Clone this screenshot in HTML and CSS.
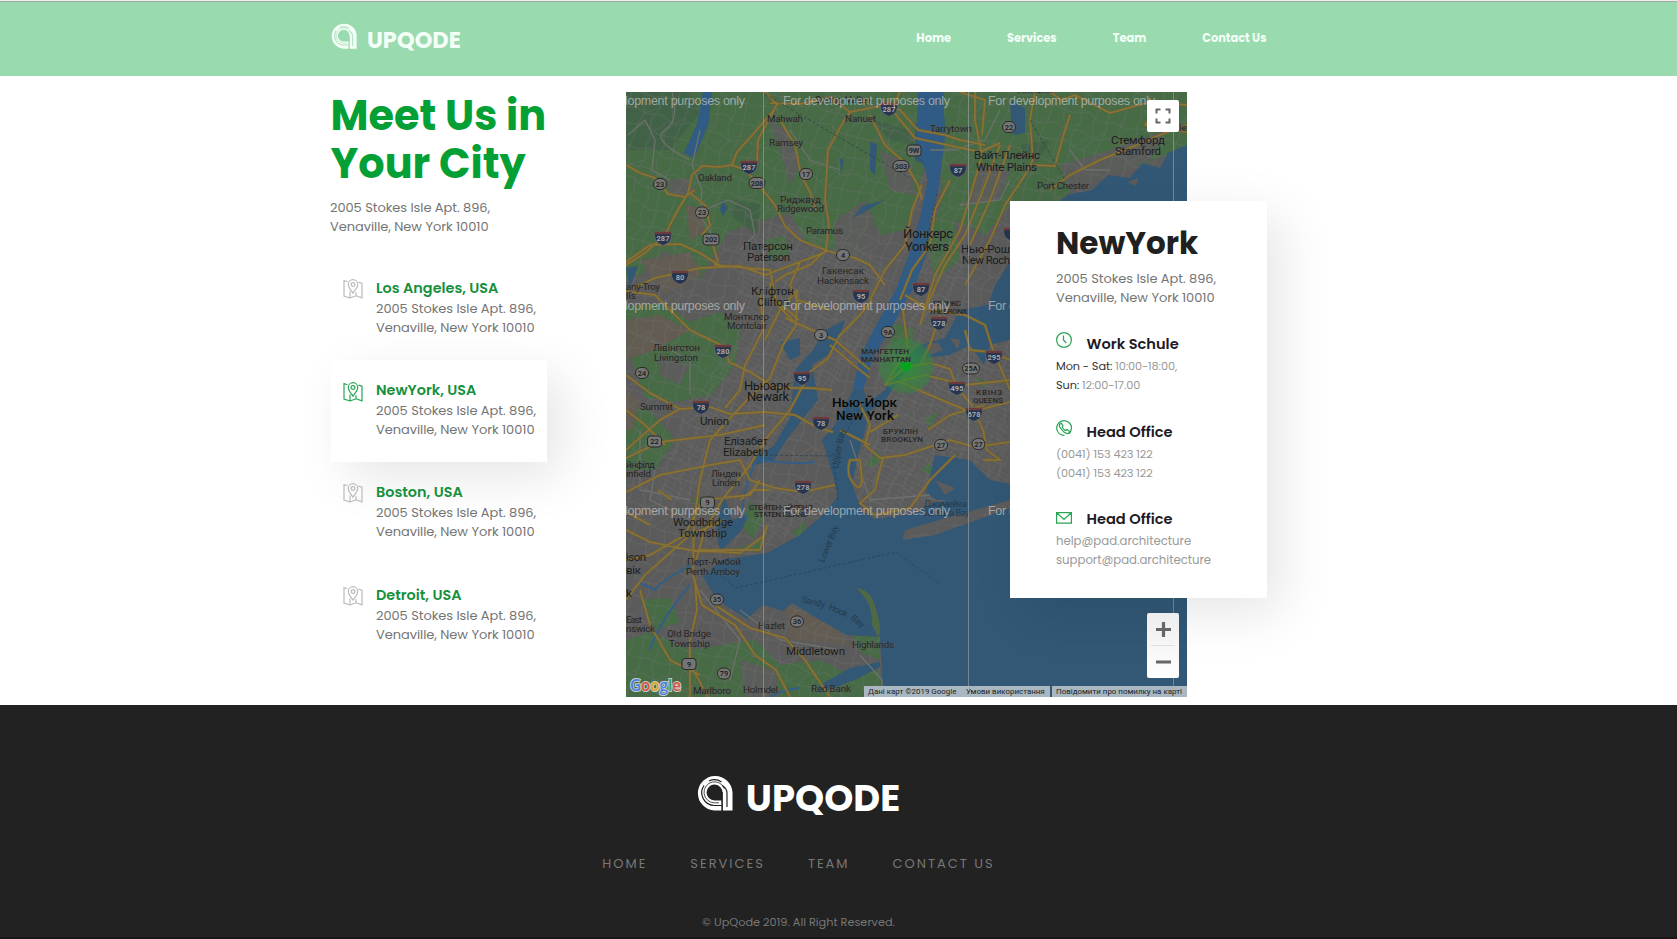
FILE: index.html
```html
<!DOCTYPE html>
<html lang="en">
<head>
<meta charset="utf-8">
<title>UPQODE</title>
<link rel="stylesheet" href="styles.css">
</head>
<body>
<svg class="defs" width="0" height="0" aria-hidden="true">
  <symbol id="logo" viewBox="0 0 36 36">
    <path d="M24.5 35.500H17.500A17.300 17.300 0 1 1 35.500 17.500V35.500H25.500V18A8 8 0 1 0 17.500 25.500H24.500Z" fill="currentColor"/>
    <path class="logo-cut" d="M24.500 30.500H17.500A12.800 12.800 0 0 1 7 10.500M12 6A12.900 12.900 0 0 1 24.500 7M25 10.500Q30 13 30 18.500V32M25.200 17V36" fill="none" stroke-width="1.200"/>
    <path class="logo-cut" d="M22 27.800H17.500A10.500 10.500 0 1 1 27.500 14" fill="none" stroke-width=".8"/>
  </symbol>
  <symbol id="pin" viewBox="0 0 20 20">
    <path d="M4.500 2.700 1 1.600V17l6 2V12.500M7 19l6-2.200 6 2V4.200l-3.500-1M13 16.800v-3.500M10 14.200C7.500 10.500 5.300 8.300 5.300 5.400a4.700 4.700 0 0 1 9.400 0c0 2.900-2.200 5.100-4.700 8.800Z" fill="none" stroke="currentColor" stroke-width="1.200"/>
    <circle cx="10" cy="5.500" r="1.900" fill="none" stroke="currentColor" stroke-width="1.200"/>
  </symbol>
</svg>

<header class="header">
  <div class="container header-row">
    <a class="brand"><svg class="brand-icon"><use href="#logo"/></svg><span>UPQODE</span></a>
    <nav class="nav"><a>Home</a><a>Services</a><a>Team</a><a>Contact Us</a></nav>
  </div>
</header>

<main class="container main">
  <section class="cities">
    <h1>Meet Us in<br>Your City</h1>
    <p class="address">2005 Stokes Isle Apt. 896,<br>Venaville, New York 10010</p>
    <ul class="list">
      <li class="item"><svg class="pin"><use href="#pin"/></svg><div><h3>Los Angeles, USA</h3><p class="address">2005 Stokes Isle Apt. 896,<br>Venaville, New York 10010</p></div></li>
      <li class="item active"><svg class="pin"><use href="#pin"/></svg><div><h3>NewYork, USA</h3><p class="address">2005 Stokes Isle Apt. 896,<br>Venaville, New York 10010</p></div></li>
      <li class="item"><svg class="pin"><use href="#pin"/></svg><div><h3>Boston, USA</h3><p class="address">2005 Stokes Isle Apt. 896,<br>Venaville, New York 10010</p></div></li>
      <li class="item"><svg class="pin"><use href="#pin"/></svg><div><h3>Detroit, USA</h3><p class="address">2005 Stokes Isle Apt. 896,<br>Venaville, New York 10010</p></div></li>
    </ul>
  </section>

  <section class="map">
    <svg class="map-canvas" viewBox="626 92 561 605" width="561" height="605">
      <defs>
        <pattern id="streets" width="58" height="54" patternUnits="userSpaceOnUse" patternTransform="rotate(17)">
          <path d="M0 8 14 10 30 5 44 11 58 8M0 24l12 3 18-2 14 5 14-6M0 42l18-4 12 6 28-2M8 0 6 14l6 13-4 12 0 15M22 0l3 18-5 14 4 22M40 0l-3 16 5 14-6 12 4 12M50 0l2 20-4 20 2 14M12 27l13-9M42 30l10-10M24 44l12-14"/>
        </pattern>
        <pattern id="blocks" width="17" height="15" patternUnits="userSpaceOnUse" patternTransform="rotate(31)">
          <path d="M0 3H17M0 8 17 9M0 13H17M4 0V15M11 0 12 15"/>
        </pattern>
        <radialGradient id="pulse"><stop offset="0" stop-color="#00c814" stop-opacity=".75"/><stop offset=".25" stop-color="#14b428" stop-opacity=".42"/><stop offset=".9" stop-color="#28a03c" stop-opacity=".25"/><stop offset="1" stop-color="#28a03c" stop-opacity="0"/></radialGradient>
        <g id="interstate"><path d="M-8-6.500Q-4-4.500 0-6.500 4-4.500 8-6.500 10.500 4 0 7.500-10.500 4-8-6.500Z" fill="#25344f" stroke="#777" stroke-width=".6"/><path d="M-8.300-6.300H8.300L8.500-3.800H-8.500Z" fill="#6b3b3c"/></g>
      </defs>
      <rect x="626" y="92" width="561" height="605" fill="#5c5b5b"/>
      <g class="park">
        <path d="M626 92H930L925 165 905 230 880 235 865 200 835 222 835 250 808 245 790 213 755 222 728 232 710 262 700 280 665 250 640 275 626 280Z"/>
        <path d="M940 92H1187V148L1130 168 1080 182 1060 201 1010 205 985 235 955 220 960 260 935 280 927 245 942 200Z"/>
        <path d="M626 306 665 303 690 322 720 312 740 330 735 365 712 395 675 402 645 398 626 345Z"/>
        <path d="M626 405 650 410 675 440 655 470 626 470ZM626 640 650 632 690 650 755 640 780 665 820 660 850 675 880 670 882 697 626 697ZM640 600 670 598 680 622 655 630Z"/>
        <path d="M765 240 785 235 790 255 770 262ZM792 533 806 520 803 542ZM735 550 765 538 760 552ZM850 630 880 635V660L860 652ZM866 465 877 450 882 460 872 468ZM925 417 938 412 930 430ZM975 378 990 382 982 388ZM920 470 930 462 932 475ZM885 320 915 330 910 345 890 342ZM690 500 710 495 712 510ZM750 500 765 515 752 540 742 525Z"/>
      </g>
      <g class="forest"><path d="M626 92 690 92 700 112 670 150 626 150ZM735 200 760 205 757 235 730 215ZM872 120 910 130 915 145 890 140ZM1020 145 1050 140 1035 165Z"/></g>
      <g class="sand"><path d="M626 320 660 315 690 330 655 350 626 360ZM640 260 690 252 702 275 665 295ZM686 205 702 208 705 232 690 240ZM785 605 830 625 850 645 820 642 790 640ZM626 390 640 400 632 430 626 430Z"/></g>
      <g class="town-ground"><path d="M665 180 690 178 695 195 672 196ZM768 118 785 130 800 165 790 185 780 150ZM880 150 912 165 915 195 890 190ZM980 165 1010 170 1000 200 965 205ZM1060 165 1110 150 1165 130 1150 160 1100 178 1070 190ZM840 215 870 212 872 260 840 262ZM660 355 690 365 680 385 660 375ZM740 660 775 670 780 697 745 697Z"/></g>
      <rect class="streets" x="626" y="92" width="561" height="605" fill="url(#streets)"/>
      <path class="blocks" fill="url(#blocks)" d="M770 225 835 230 890 270 870 345 820 400 750 470 700 500 650 500 690 400 745 330 735 260ZM865 425 880 350 930 310 960 350 1010 335V490L935 500 880 510 850 470ZM760 485 810 480 830 500 780 540 750 530ZM905 250 960 240 965 285 910 330Z"/>
      <g class="water">
        <path d="M918 92H943L945 135 939 185 930 220 927 252 915 285 906 300 893 325 873 357 863 390 870 405 866 428 858 455 852 485 862 511 875 519 912 514 935 503 960 497 1010 489V505L960 514 925 525 905 531 903 540 935 535 1010 508V595H1187V697H883L880 637 847 635 820 620 792 603 783 611 763 605 747 619 717 600 703 577 720 560 767 553 800 535 827 511 838 495 827 455 822 440 835 425 853 390 860 357 878 322 896 290 910 252 920 218 928 180 917 140Z"/>
        <path d="M1187 145 1168 153 1160 168 1142 163 1130 178 1108 175 1092 190 1070 194 1060 201V215H1187ZM1010 262 995 285 988 305 960 310 945 338 920 345 900 363 885 390 865 405 863 415 884 402 901 377 925 358 950 355 970 345 984 365 990 345 1010 340ZM703 92 712 92 708 125 694 158 684 153 697 125ZM870 142 877 144 875 175 870 170ZM885 200 862 206 853 218 868 210ZM722 200 728 208 723 216 720 210ZM840 158 844 160 841 175ZM626 268 638 266 630 288ZM795 370 813 350 825 330 845 320 836 350 812 365 818 400 790 435 773 461 752 465 755 454 773 447 790 418ZM1010 100 1025 108 1025 133 1013 135 1011 118ZM915 125 922 115 925 165 915 160ZM935 455 970 460 990 480 1010 484V500H937L926 493ZM820 685 850 668 880 662V667L855 680 820 693ZM780 342 800 338 800 355 790 360ZM724 495 732 520 748 515 742 530 720 552 716 530Z"/>
        <path class="creek" d="M758 455Q735 510 747 520M703 560Q660 580 655 590L638 582M815 462Q790 465 760 460M770 697Q780 690 800 688M690 585Q660 620 650 650"/>
      </g>
      <path class="river" d="M918 92H943L945 135 939 185 930 220 927 252 915 285 906 300 893 325 873 357 863 390 853 390 860 357 878 322 896 290 910 252 920 218 928 180 917 140ZM703 92 712 92 708 125 694 158 684 153 697 125Z"/>
      <path class="spit" d="M857 588Q872 590 876 610 882 625 879 638L872 625Q872 605 864 597Z"/>
      <path class="land" d="M903 538 905 530 950 517 1010 500V505L935 529ZM926 345 938 342 943 350 930 355ZM950 338 960 340 958 350ZM935 480 955 488 945 495ZM1128 182 1138 178 1136 186Z"/>
      <g class="minor"><path d="M628 135 645 120 655 140 652 170 670 180M700 130 692 165 702 190 700 215 712 235M672 92Q680 120 665 130T690 160M740 250 755 235 750 210 728 200 700 212M790 130 810 160 840 170M930 150 955 150 985 140 1000 110M1070 150 1085 170 1110 170M700 590 740 640 730 680M740 610 780 640 840 650M860 655 882 680V697M850 440 870 500 930 495M650 340 690 360 690 395M655 470 650 500 690 520M1010 180 1000 200 960 205M640 430 640 490 690 500"/></g>
      <g class="road-edge">
        <path id="roadpath" d="M626 165 640 173 655 178 668 194 685 197 695 190M626 265 645 253 665 235 675 215 688 193 692 175 702 166 720 167 732 165 745 170 757 183 775 205 785 226 800 240 828 251 855 258 870 265 885 285M732 165 737 152 755 132 774 110 777 104 765 92M770 103 800 104 830 97 850 112 885 105 900 110 918 130 945 135 960 140 985 145M757 165 758 140 774 110M780 120 795 145 801 175 810 192 816 210M850 112 843 122 828 150 825 200 829 225 826 250 810 265 785 275 775 282M870 115 885 145 905 163 918 185 922 200M626 292 655 278 700 268 740 266 765 275 800 262 828 251M626 262 650 245 680 244 700 253 722 267M710 235 718 262M690 193 705 205 710 225 702 235M632 292 655 295 690 330 725 347 729 362 752 373 775 388 810 388 832 390M770 282 773 300 797 325M797 290 796 325 783 345 770 378 745 402 710 440 700 480 694 520 693 575 702 605 735 625 755 655 776 670 790 697M760 290 763 330 745 365 740 390 725 408M872 300 860 315 840 335 828 358 810 372 790 410 765 440 750 465 722 500 705 530 696 560M797 290 780 310 765 340M785 318 812 330 835 340 870 370M830 345 855 366 870 378M626 375 650 393 680 409 710 407 730 414 765 412 795 415 818 428 833 432M626 450 660 420 680 409M626 458 660 442 720 435 765 425M626 492 660 475 710 465 740 460 750 480 775 488 803 492 835 485M714 265 770 270 776 300 799 320M800 262 790 285 797 300 830 310M870 300 885 270 905 245 912 210 922 185M900 300 912 270 930 245 935 210 950 180M975 92 975 120 982 155 972 190 960 230 935 275 920 325M1000 145 983 190 965 235 945 265 925 310M1010 145 990 200 970 245M1035 92 1030 120 1033 160 1025 175 1005 205 990 240 965 285M1050 92 1062 100 1075 95 1110 113 1150 102 1187 105M1155 110 1145 125 1187 132M1050 190 1070 175 1100 160 1125 150 1160 135 1187 125M1033 165 1055 166 1062 140 1070 115M900 92 892 110 915 138 980 152 1000 143M960 92 985 100 982 135M903 310 908 350 893 372 885 385M905 295 930 310 965 315 985 325 993 350 1010 390M885 385 905 367 930 363 950 369 957 388 972 405 983 430 987 450M885 385 925 375 965 385 1010 380M900 382 930 395 970 412 1010 402M928 430 950 415 985 405M860 405 870 425 865 445 880 458 905 455 935 445 950 440 975 447 1010 442M883 457 875 490 860 503 875 515 910 508 930 480 955 455M850 460Q845 475 855 485T860 460ZM987 450 1000 460 983 460M898 415 870 432M840 430 870 445M965 330 970 350 990 352 1010 360M940 315 930 345 920 365M626 530 650 542 690 550 740 553 765 535M626 600 645 575 690 535 725 520M640 590 650 625 670 660 700 675M715 605 750 628 785 638 805 660 815 675 830 697M695 580 697 610 690 640 690 697M626 560 650 555 685 535 702 500 750 495 760 480M700 550 760 550 767 525M626 410 645 425 665 445M740 500 753 490 770 490M708 697 690 664M626 512 650 525M658 490 672 500"/>
      </g>
      <use class="road-core" href="#roadpath"/>
      <path class="dash" d="M765 94 840 138 910 178M720 575 736 588 896 552 940 584M925 250 938 190M1030 120 1065 180M838 500 833 455 865 400M760 455 832 456"/>
      <circle cx="906" cy="366" r="27" fill="#446b45" fill-opacity=".45"/>
      <circle cx="906" cy="366" r="29" fill="url(#pulse)"/><circle cx="906" cy="365.500" r="5" fill="#05a51a"/>

      <g class="label">
        <text x="815" y="103" textLength="56">Spring Valley</text><text x="767" y="122" textLength="36">Mahwah</text><text x="845" y="122" textLength="31">Nanuet</text><text x="769" y="146" textLength="34">Ramsey</text><text x="698" y="181" textLength="34">Oakland</text><text x="780" y="203" textLength="41">Риджвуд</text><text x="777" y="212" textLength="47">Ridgewood</text><text x="806" y="234" textLength="37">Paramus</text><text x="822" y="274" textLength="42">Гакенсак</text><text x="817" y="284" textLength="52">Hackensack</text><text x="626" y="290" textLength="34">any-Troy</text><text x="626" y="299">lls</text><text x="724" y="320" textLength="45">Монтклер</text><text x="727" y="329" textLength="40">Montclair</text><text x="653" y="351" textLength="47">Лівінгстон</text><text x="654" y="361" textLength="44">Livingston</text><text x="640" y="410" textLength="33">Summit</text><text x="626" y="468" textLength="29">йнфілд</text><text x="626" y="477" textLength="25">infield</text><text x="711" y="477" textLength="30">Лінден</text><text x="712" y="486" textLength="28">Linden</text><text x="687" y="565" textLength="54">Перт-Амбой</text><text x="686" y="575" textLength="54">Perth Amboy</text><text x="626" y="623" textLength="16">East</text><text x="626" y="632" textLength="29">nswick</text><text x="667" y="637" textLength="44">Old Bridge</text><text x="669" y="647" textLength="41">Township</text><text x="758" y="629" textLength="27">Hazlet</text><text x="852" y="648" textLength="42">Highlands</text><text x="693" y="694" textLength="38">Marlboro</text><text x="743" y="693" textLength="35">Holmdel</text><text x="811" y="692" textLength="40">Red Bank</text><text x="930" y="132" textLength="42">Tarrytown</text><text x="1037" y="189" textLength="52">Port Chester</text><text x="1018" y="93" textLength="34">Armonk</text><text x="1179" y="131">ie</text>
      </g>
      <g class="label town">
        <text x="743" y="250" textLength="50">Патерсон</text><text x="747" y="261" textLength="43">Paterson</text><text x="751" y="295" textLength="43">Кліфтон</text><text x="757" y="306" textLength="32">Clifton</text><text x="700" y="425" textLength="29">Union</text><text x="724" y="445" textLength="44">Елізабет</text><text x="723" y="456" textLength="45">Elizabeth</text><text x="673" y="526" textLength="60">Woodbridge</text><text x="678" y="537" textLength="49">Township</text><text x="626" y="561" textLength="20">ison</text><text x="626" y="574" textLength="15">вік</text><text x="626" y="597">k</text><text x="786" y="655" textLength="59">Middletown</text><text x="974" y="159" textLength="66">Вайт-Плейнс</text><text x="976" y="171" textLength="61">White Plains</text><text x="1111" y="144" textLength="54">Стемфорд</text><text x="1115" y="155" textLength="46">Stamford</text><text x="961" y="253" textLength="49">Нью-Рош</text><text x="962" y="264" textLength="48">New Roch</text>
      </g>
      <g class="label large"><text x="744" y="390" textLength="46">Ньюарк</text><text x="747" y="401" textLength="42">Newark</text><text x="903" y="238" textLength="50">Йонкерс</text><text x="905" y="251" textLength="44">Yonkers</text></g>
      <g class="label capital"><text x="832" y="407" textLength="65">Нью-Йорк</text><text x="836" y="420" textLength="58">New York</text></g>
      <g class="label borough"><text x="861" y="354" textLength="48">МАНГЕТТЕН</text><text x="861" y="362" textLength="50">MANHATTAN</text><text x="883" y="434" textLength="35">БРУКЛІН</text><text x="881" y="442" textLength="42">BROOKLYN</text><text x="749" y="510" textLength="64">СТЕЙТЕН-АЙЛЕНД</text><text x="754" y="517" textLength="54">STATEN ISLAND</text><text x="933" y="306" textLength="28">БРОНКС</text><text x="929" y="314" textLength="38">THE BRONX</text><text x="976" y="395" textLength="26">КВІНЗ</text><text x="973" y="403" textLength="30">QUEENS</text></g>
      <g class="label sea"><text x="924" y="507" textLength="43">Джамейка</text><text x="923" y="516" textLength="46">Jamaica Bay</text><text transform="translate(838 469) rotate(-80)" textLength="40">Upper Bay</text><text transform="translate(824 563) rotate(-68)" textLength="39">Lower Bay</text><text transform="translate(801 602) rotate(14)" textLength="24">Sandy</text><text transform="translate(828 609) rotate(25)" textLength="20">Hook</text><text transform="translate(850 619) rotate(38)" textLength="15">Bay</text></g>

      <g class="route">
        <g><rect x="653.500" y="178.500" width="13" height="11" rx="5.500"/><rect x="749" y="177.500" width="16" height="11" rx="5.500"/><rect x="799.500" y="168.500" width="13" height="11" rx="5.500"/><rect x="695.500" y="207" width="13" height="11" rx="5.500"/><rect x="836.500" y="249.500" width="13" height="11" rx="5.500"/><rect x="893" y="160.500" width="16" height="11" rx="5.500"/><rect x="1002.500" y="121.500" width="13" height="11" rx="5.500"/><rect x="814.500" y="329.500" width="13" height="11" rx="5.500"/><rect x="635.500" y="367.500" width="13" height="11" rx="5.500"/><rect x="881.500" y="326.500" width="13" height="11" rx="5.500"/><rect x="962.500" y="363" width="17" height="11" rx="5.500"/><rect x="934.500" y="439.500" width="13" height="11" rx="5.500"/><rect x="972" y="438.500" width="13" height="11" rx="5.500"/><rect x="710.500" y="594" width="13" height="11" rx="5.500"/><rect x="790.500" y="616" width="13" height="11" rx="5.500"/><rect x="717.500" y="668" width="13" height="11" rx="5.500"/><rect x="907" y="145" width="14" height="11" rx="3"/><rect x="703" y="234" width="16" height="11" rx="3"/><rect x="647.500" y="436" width="14" height="11" rx="3"/><rect x="700.500" y="497" width="14" height="11" rx="3"/><rect x="682" y="658.500" width="14" height="11" rx="3"/></g>
        <text x="660" y="186.500">23</text><text x="757" y="185.500">208</text><text x="806" y="176.500">17</text><text x="702" y="215">23</text><text x="843" y="257.500">4</text><text x="901" y="168.500">303</text><text x="1009" y="129.500">22</text><text x="821" y="337.500">3</text><text x="642" y="375.500">24</text><text x="888" y="334.500">9A</text><text x="971" y="371">25A</text><text x="941" y="447.500">27</text><text x="978.500" y="446.500">27</text><text x="717" y="602">35</text><text x="797" y="624">36</text><text x="724" y="676">79</text><text x="914" y="153">9W</text><text x="711" y="242">202</text><text x="654.500" y="444">22</text><text x="707.500" y="505">9</text><text x="689" y="667">9</text>
      </g>
      <g class="highway">
        <use href="#interstate" x="889" y="109"/><use href="#interstate" x="749" y="167"/><use href="#interstate" x="663" y="238"/><use href="#interstate" x="680" y="277"/><use href="#interstate" x="958" y="170"/><use href="#interstate" x="921" y="289"/><use href="#interstate" x="861" y="296"/><use href="#interstate" x="723" y="351"/><use href="#interstate" x="802" y="378"/><use href="#interstate" x="701" y="407"/><use href="#interstate" x="821" y="423"/><use href="#interstate" x="803" y="487"/><use href="#interstate" x="939" y="323"/><use href="#interstate" x="994" y="357"/><use href="#interstate" x="957" y="388"/><use href="#interstate" x="974" y="414"/><use href="#interstate" x="1012" y="234"/>
        <text x="889" y="112">287</text><text x="749" y="170">287</text><text x="663" y="241">287</text><text x="680" y="280">80</text><text x="958" y="173">87</text><text x="921" y="292">87</text><text x="861" y="299">95</text><text x="723" y="354">280</text><text x="802" y="381">95</text><text x="701" y="410">78</text><text x="821" y="426">78</text><text x="803" y="490">278</text><text x="939" y="326">278</text><text x="994" y="360">295</text><text x="957" y="391">495</text><text x="974" y="417">678</text>
      </g>
      <path class="tiles" d="M763.500 92V697M968.500 92V697M1173.500 92V697"/>
      <g class="watermark"><text x="578" y="105" textLength="167">For development purposes only</text><text x="783" y="105" textLength="167">For development purposes only</text><text x="988" y="105" textLength="167">For development purposes only</text><text x="578" y="310" textLength="167">For development purposes only</text><text x="783" y="310" textLength="167">For development purposes only</text><text x="988" y="310" textLength="167">For development purposes only</text><text x="578" y="514.500" textLength="167">For development purposes only</text><text x="783" y="514.500" textLength="167">For development purposes only</text><text x="988" y="514.500" textLength="167">For development purposes only</text></g>
      <text class="google" x="630" y="691" textLength="51" lengthAdjust="spacingAndGlyphs"><tspan fill="#4a83e0">G</tspan><tspan fill="#d85040">o</tspan><tspan fill="#dca514">o</tspan><tspan fill="#4a83e0">g</tspan><tspan fill="#3a9a55">l</tspan><tspan fill="#d85040">e</tspan></text>
    </svg>

    <div class="map-button expand"><svg width="16" height="16" viewBox="0 0 16 16"><path d="M1.500 5.500V1.500H5.500M10.500 1.500H14.500V5.500M14.500 10.500V14.500H10.500M5.500 14.500H1.500V10.500" fill="none" stroke="#666" stroke-width="2"/></svg></div>
    <div class="legal"><span class="data">Дані карт ©2019 Google</span><span class="terms">Умови використання</span><span class="report">Повідомити про помилку на карті</span></div>

    <article class="office">
      <h2>NewYork</h2>
      <p class="address">2005 Stokes Isle Apt. 896,<br>Venaville, New York 10010</p>
      <section class="contact hours">
        <h4><svg viewBox="0 0 16 16"><circle cx="8" cy="8" r="7.400"/><path d="M7.500 3.500V8L10.300 11"/></svg>Work Schule</h4>
        <p><b>Mon - Sat:</b> 10:00-18:00,<br><b>Sun:</b> 12:00-17.00</p>
      </section>
      <section class="contact phone">
        <h4><svg viewBox="0 0 16 16"><path d="M3.200 13.600A7.400 7.400 0 1 1 12.800 13.700M3.300 13.600Q5.500 15.500 8.500 15.400"/><path d="M4.300 3.500Q2.500 5 4 7.500T8 12Q11.500 14.800 13.500 12.500L13.800 11.500 10.800 9.500 9.500 10.500Q7.500 9.500 6.200 7.200L7 5.800 5.200 3.200Z"/></svg>Head Office</h4>
        <p>(0041) 153 423 122<br>(0041) 153 423 122</p>
      </section>
      <section class="contact mail">
        <h4><svg viewBox="0 0 16 16"><path d="M.6 2.700H15.400V13.200H.6ZM1 3 8 9.500 15 3"/></svg>Head Office</h4>
        <p>help@pad.architecture<br>support@pad.architecture</p>
      </section>
    </article>
    <div class="map-button zoom"><svg width="32" height="65" viewBox="0 0 32 65"><path d="M9 16.500H24M16.500 9V24M9 49H24" stroke="#666" stroke-width="3.200"/><path d="M4 32.500H28" stroke="#e0e0e0"/></svg></div>
  </section>
</main>

<footer class="footer">
  <div class="footer-inner">
    <a class="brand footer-brand"><svg class="brand-icon"><use href="#logo"/></svg><span>UPQODE</span></a>
    <nav class="footer-nav"><a>HOME</a><a>SERVICES</a><a>TEAM</a><a>CONTACT US</a></nav>
    <p class="copyright">© UpQode 2019. All Right Reserved.</p>
  </div>
</footer>
</body>
</html>
```
FILE: styles.css
```css
* { box-sizing: border-box; margin: 0; padding: 0; }
body {
  width: 1677px; height: 939px; overflow: hidden; background: #fff;
  font-family: Poppins, Inter, "Open Sans", sans-serif; color: #666;
}
.defs { position: absolute; }
.container { width: 937px; margin-left: 330px; }

.header { --cut: #9adaaf; height: 76px; background: #9adaaf; border-top: 1px solid #eee; box-shadow: inset 0 1px #a0aaa3; color: #f4fff7; }
.header-row { display: flex; justify-content: space-between; height: 75px; }
.brand { display: flex; font-weight: 700; }
.brand-icon { width: 26px; height: 26px; margin: 22px 0 0 .5px; }
.logo-cut { stroke: var(--cut); }
.brand span { font-size: 22.500px; line-height: 26px; margin: 26px 0 0 10.500px; }
.nav { display: flex; gap: 56px; font-size: 11.400px; font-weight: 700; line-height: 16px; padding: 29px .5px 0 0; }

.main { display: flex; height: 629px; }
.cities { width: 296px; padding-top: 16px; }
h1 { font-size: 41.400px; line-height: 48px; font-weight: 700; color: #04a035; margin-left: .5px; }
.address { font-size: 13px; line-height: 19px; letter-spacing: -.06px; color: #747474; font-weight: 400; white-space: nowrap; }
.cities > .address { margin-top: 10px; }
.list { list-style: none; margin: 22px 0 0 1px; width: 216px; }
.item { display: flex; gap: 13.500px; height: 102.200px; padding: 20px 0 0 11.500px; position: relative; z-index: 1; }
.item.active { z-index: 0; background: #fff; box-shadow: 15px 15px 50px rgba(0, 0, 0, .1); }
.pin { width: 20px; height: 20px; margin-top: 1px; color: #bbb; flex: none; }
.active .pin { color: #27a552; margin-top: 2px; }
h3 { font-size: 14.400px; line-height: 20px; font-weight: 600; color: #16903c; white-space: nowrap; }
.item .address { margin-top: 1px; }

.map { position: relative; width: 561px; height: 605px; margin-top: 16px; flex: none; }
.map-canvas { display: block; font-family: Roboto, sans-serif; }
.park { fill: #466b45; }
.forest { fill: #416246; }
.sand { fill: #625c52; }
.town-ground { fill: #5a5d59; }
.streets, .blocks { opacity: .45; }
#streets path { fill: none; stroke: #747474; stroke-width: .9; }
#blocks path { fill: none; stroke: #717171; stroke-width: .7; }
.water { fill: #325875; }
.river { fill: #2f5b85; }
.creek { fill: none; stroke: #315f87; stroke-width: 2; }
.spit { fill: #4f6945; }
.land { fill: #5c5c5c; }
.minor { fill: none; stroke: #6e716d; stroke-width: 1.300; }
.road-edge { fill: none; stroke: #716038; stroke-width: 2.800; stroke-linejoin: round; }
.road-core { fill: none; stroke: #8a7434; stroke-width: 1.500; }
#roadpath { stroke-linejoin: round; }
.dash { fill: none; stroke: #2a3d4c; stroke-width: .7; stroke-dasharray: 3 2; }
.label { font-size: 9.800px; fill: #262626; stroke: #606060; stroke-opacity: .45; stroke-width: 1px; paint-order: stroke; }
.town { font-size: 11.500px; fill: #1c1c1c; }
.large { font-size: 13px; fill: #181818; }
.capital { font-size: 13.500px; font-weight: 500; fill: #080808; }
.borough { font-size: 8px; font-weight: 500; }
.sea { fill: #243c50; stroke: none; font-size: 9px; }
.route rect { fill: #757575; stroke: #222; stroke-width: .9; }
.route text { font-size: 7.400px; text-anchor: middle; fill: #181818; font-weight: 500; }
.highway text { font-size: 7.500px; text-anchor: middle; fill: #aaa; font-weight: 700; }
.tiles { stroke: #9b9f9f; stroke-opacity: .65; }
.watermark { font: 12.500px "Liberation Sans", sans-serif; fill: #c0c0c0; fill-opacity: .75; }
.google { font: 600 17px "Open Sans", sans-serif; stroke: #c9cdc9; stroke-width: 2px; paint-order: stroke; }
.map-button { position: absolute; display: flex; justify-content: center; align-items: center; right: 8px; width: 32px; background: #fff; border-radius: 2px; }
.expand { top: 8px; height: 32px; }
.zoom { top: 521px; height: 65px; background: linear-gradient(#ededed, #fff); }
.legal { position: absolute; display: flex; right: 0; bottom: 0; height: 11px; width: 323px; font: 7.950px/11px Roboto, sans-serif; color: #222; white-space: nowrap; }
.legal span { background: #a9b7c0; padding-left: 4px; }
.data { width: 98px; }
.terms { width: 88px; margin-right: 2px; }
.report { width: 135px; }

.office { position: absolute; left: 384px; top: 109px; width: 257px; height: 397px; padding: 24px 0 0 46px; background: #fff; box-shadow: 15px 15px 50px rgba(0, 0, 0, .1); }
h2 { font-size: 31px; line-height: 36px; font-weight: 700; color: #202020; }
.office > .address { margin-top: 8px; }
.contact h4 { display: flex; gap: 14.500px; font-size: 14.600px; line-height: 20px; font-weight: 600; color: #1d1a25; }
.contact svg { width: 16px; height: 16px; flex: none; fill: none; stroke: #27a552; stroke-width: 1.200; }
.contact p { font-size: 11.300px; line-height: 19px; font-weight: 400; color: #999; margin-top: 3px; }
.contact b { font-weight: 400; color: #333; }
.hours { margin-top: 27px; }
.hours svg, .phone svg { margin-top: -2px; }
.hours p, .phone p { letter-spacing: -.1px; }
.phone { margin-top: 27px; }
.mail { margin-top: 26px; }
.mail svg { margin-top: 1px; }
.contact.mail p { font-size: 11.700px; }

.footer { --cut: #222; height: 234px; background: #222; border-bottom: 2px solid #171717; color: #777; }
.footer-inner { width: 1597px; display: flex; flex-direction: column; align-items: center; }
.footer-brand { color: #fff; margin-top: 70px; height: 50px; }
.footer-brand .brand-icon { width: 36px; height: 36px; margin: 0; }
.footer-brand span { font-size: 37px; line-height: 42px; margin: 2px 0 0 13px; }
.footer-nav { display: flex; gap: 43px; font-size: 13px; line-height: 20px; letter-spacing: 2px; margin-top: 29px; }
.copyright { font-size: 11.300px; line-height: 18px; margin-top: 39px; }
```
